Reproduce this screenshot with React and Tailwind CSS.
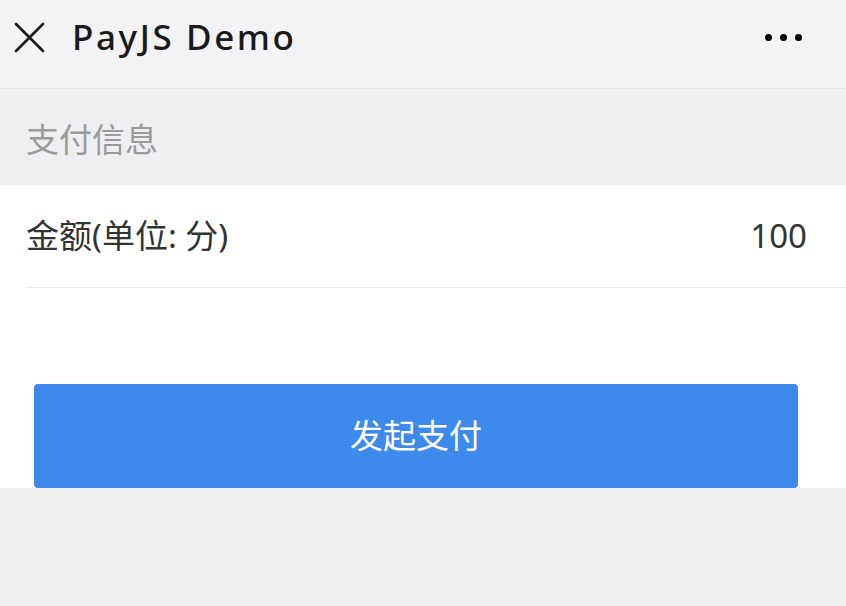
export default function App() {
  return (
    <div className="w-[846px] h-[606px] bg-[#efeff1] flex flex-col" style={{ fontFamily: '"Noto Sans", "Noto Sans CJK SC", sans-serif' }}>
      {/* top bar */}
      <div className="h-[89px] shrink-0 bg-[#f3f3f5] border-b border-[#e4e4e6] flex items-center pl-[14px] pr-[44px] pb-[14px]">
        <svg width="31" height="31" viewBox="0 0 31 31" fill="none" stroke="#1a1a1a" strokeWidth="2.6" strokeLinecap="round">
          <path d="M2 2 L29 29 M29 2 L2 29" />
        </svg>
        <h1 className="ml-[27px] text-[35px] font-medium text-[#1a1a1a] tracking-[2.6px]">PayJS Demo</h1>
        <div className="ml-auto flex gap-[8px] items-center">
          <span className="w-[7px] h-[7px] rounded-full bg-black" />
          <span className="w-[7px] h-[7px] rounded-full bg-black" />
          <span className="w-[7px] h-[7px] rounded-full bg-black" />
        </div>
      </div>

      <div className="h-[96px] flex items-center px-[26px] pt-[6px] text-[33px] text-[#9b9b9b]">支付信息</div>

      <div className="bg-white">
        <div className="ml-[26px] h-[103px] flex items-center justify-between pr-[39px] border-b border-[#ebebeb] text-[33px] text-[#333]">
          <span>金额(单位: 分)</span>
          <span>100</span>
        </div>
        <div className="pt-[96px] pl-[34px] pr-[48px]">
          <button className="w-full h-[104px] bg-[#3d89ec] rounded-[4px] text-white text-[33px]">发起支付</button>
        </div>
      </div>
    </div>
  );
}
